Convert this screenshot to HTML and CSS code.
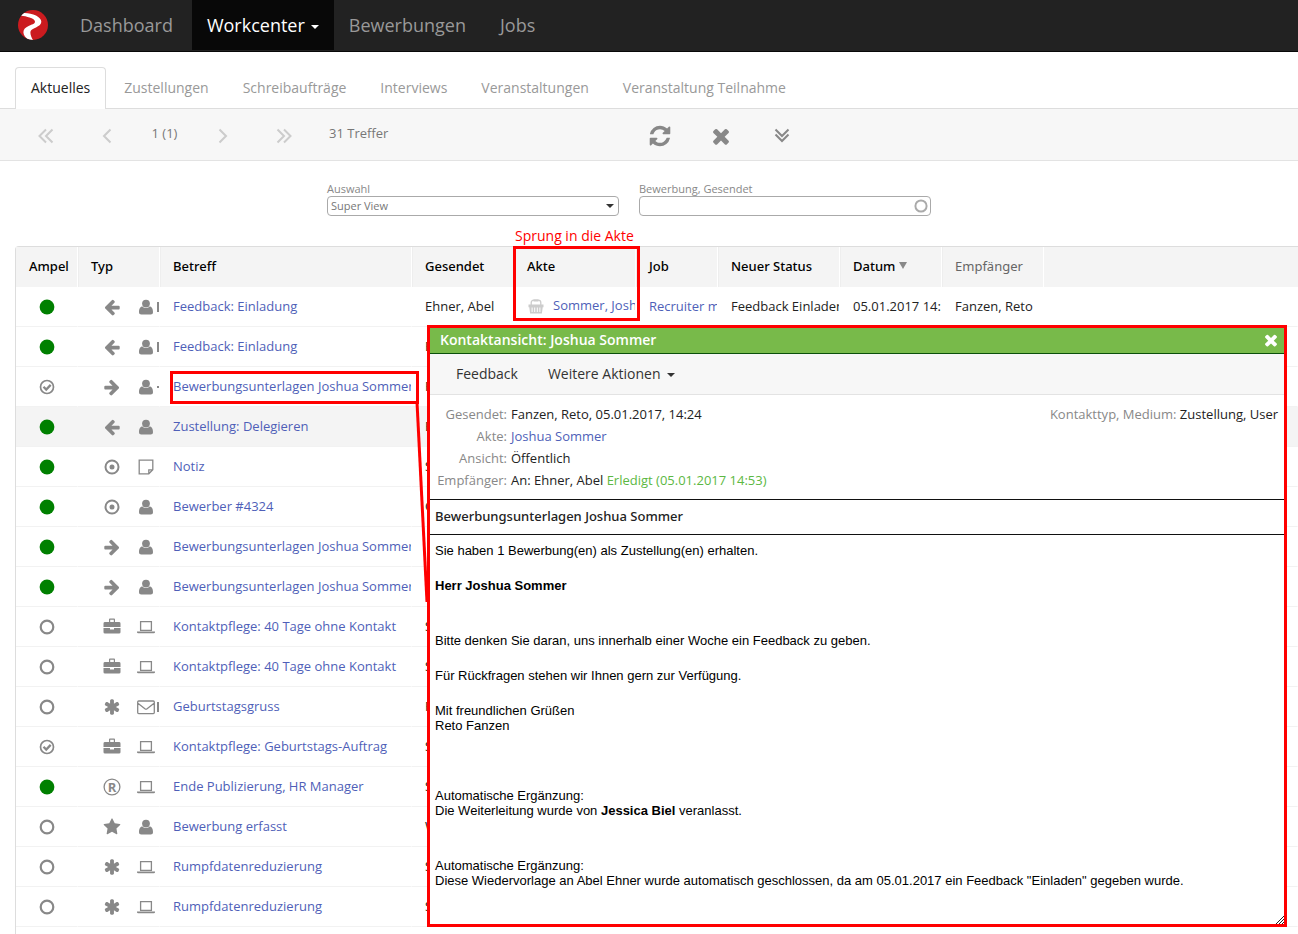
FILE: index.html
```html
<!DOCTYPE html>
<html lang="de">
<head>
<meta charset="utf-8">
<title>Workcenter</title>
<link rel="stylesheet" href="styles.css">
</head>
<body>
<svg class="sprite" aria-hidden="true">
  <symbol id="left" viewBox="0 0 1792 1792"><path d="M1664 896v128q0 53-32.5 90.5t-84.5 37.5h-704l293 294q38 36 38 90t-38 90l-75 76q-37 37-90 37-52 0-91-37l-651-652q-37-37-37-90 0-52 37-91l651-650q38-38 91-38 52 0 90 38l75 74q38 38 38 91t-38 91l-293 293h704q52 0 84.500 37.500t32.500 90.500z"/></symbol>
  <symbol id="right" viewBox="0 0 1792 1792"><path d="M1600 960q0 54-37 91l-651 651q-39 37-91 37-51 0-90-37l-75-75q-38-38-38-91t38-91l293-293h-704q-52 0-84.500-37.500t-32.500-90.500v-128q0-53 32.500-90.500t84.500-37.500h704l-293-294q-38-36-38-90t38-90l75-75q38-38 90-38 53 0 91 38l651 651q37 35 37 90z"/></symbol>
  <symbol id="user" viewBox="0 0 18 18"><circle cx="9" cy="5.600" r="3.900"/><path d="M5.500 8.500C3 8.500 2 11 2 14.200 2 15.500 3 16.500 4.200 16.500h9.600c1.200 0 2.200-1 2.200-2.300 0-3.200-1-5.700-3.500-5.700-2 2-5 2-7 0z"/></symbol>
  <symbol id="target" viewBox="0 0 18 18"><circle cx="9" cy="9" r="6.500" fill="none" stroke="currentColor" stroke-width="2"/><circle cx="9" cy="9" r="2.500"/></symbol>
  <symbol id="note" viewBox="0 0 18 18"><path d="M2.200 2.200h13.600v9.600l-4 4H2.200zM11.800 15.800v-4h4" fill="none" stroke="currentColor" stroke-width="1.300"/></symbol>
  <symbol id="laptop" viewBox="0 0 18 18"><path d="M3.600 3.600h10.800v8.800H3.600z" fill="none" stroke="currentColor" stroke-width="1.300"/><path d="M0 13.500h18v.8q0 .9-1.200.9H1.200Q0 15.200 0 14.300z"/></symbol>
  <symbol id="case" viewBox="0 0 18 18"><path d="M6 4V1.500q0-.9.900-.9h4.200q.9 0 .9.900V4h4q1.500 0 1.500 1.400V9h-17V5.400Q.5 4 2 4zM7.200 4h3.600V1.800H7.200zM.5 10H7v1.500h4V10h6.500v4.200q0 1.400-1.500 1.400H2q-1.500 0-1.500-1.400z" fill-rule="evenodd"/></symbol>
  <symbol id="asterisk" viewBox="0 0 1792 1792"><path d="M1546 1050q46 26 59.500 77.500t-12.500 97.500l-64 110q-26 46-77.500 59.500t-97.500-12.500l-266-153v307q0 52-38 90t-90 38h-128q-52 0-90-38t-38-90v-307l-266 153q-46 26-97.500 12.500t-77.500-59.500l-64-110q-26-46-12.500-97.500t59.500-77.500l266-154-266-154q-46-26-59.500-77.500t12.500-97.500l64-110q26-46 77.500-59.500t97.500 12.500l266 153v-307q0-52 38-90t90-38h128q52 0 90 38t38 90v307l266-153q46-26 97.500-12.500t77.500 59.500l64 110q26 46 12.500 97.500t-59.500 77.500l-266 154z"/></symbol>
  <symbol id="mail" viewBox="0 0 18 18"><path d="M1.700 3h14.600q1 0 1 1v10.600q0 1-1 1H1.700q-1 0-1-1V4q0-1 1-1zM.9 5.200l7 5.500q1.100.8 2.200 0l7-5.500" fill="none" stroke="currentColor" stroke-width="1.300"/></symbol>
  <symbol id="star" viewBox="0 0 1792 1792"><path d="M1728 647q0 22-26 48l-363 354 86 500q1 7 1 20 0 21-10.500 35.500t-30.500 14.500q-19 0-40-12l-449-236-449 236q-22 12-40 12-21 0-31.500-14.500t-10.500-35.500q0-6 2-20l86-500-364-354q-25-27-25-48 0-37 56-46l502-73 225-455q19-41 49-41t49 41l225 455 502 73q56 9 56 46z"/></symbol>
  <symbol id="dot" viewBox="0 0 18 18"><circle cx="9" cy="9" r="7.400"/></symbol>
  <symbol id="ring" viewBox="0 0 18 18"><circle cx="9" cy="9" r="6.300" fill="none" stroke="currentColor" stroke-width="2.200"/></symbol>
  <symbol id="check" viewBox="0 0 18 18"><circle cx="9" cy="9" r="6.500" fill="none" stroke="currentColor" stroke-width="1.700"/><path d="M5.500 8.800l2.700 2.700 4.500-4.600" fill="none" stroke="currentColor" stroke-width="2.300"/></symbol>
  <symbol id="reg" viewBox="0 0 18 18"><circle cx="9" cy="9" r="7.900" fill="none" stroke="currentColor" stroke-width="1.300"/><text x="9" y="13.500" text-anchor="middle" font-size="13" font-weight="700">R</text></symbol>
  <symbol id="basket" viewBox="0 0 18 18"><path d="M4.200 7V4.800q0-2.600 2.600-2.600h4.400q2.600 0 2.600 2.600V7" fill="none" stroke="currentColor" stroke-width="1.300"/><path d="M6.500 1.500h5v2h-5zM1.500 6.500h15v2.700h-.8l-.8 6.200H3.100l-.8-6.200h-.8zM4.600 9.500v4.500h1V9.500zm2.600 0v4.500h1V9.500zm2.600 0v4.500h1V9.500zm2.600 0v4.500h1V9.500z" fill-rule="evenodd"/></symbol>
  <symbol id="times" viewBox="0 0 1792 1792"><path d="M1490 1322q0 40-28 68l-136 136q-28 28-68 28t-68-28l-294-294-294 294q-28 28-68 28t-68-28l-136-136q-28-28-28-68t28-68l294-294-294-294q-28-28-28-68t28-68l136-136q28-28 68-28t68 28l294 294 294-294q28-28 68-28t68 28l136 136q28 28 28 68t-28 68l-294 294 294 294q28 28 28 68z"/></symbol>
  <symbol id="refresh" viewBox="0 0 1792 1792"><path d="M1639 1056q0 5-1 7-64 268-268 434.500t-478 166.500q-146 0-282.500-55t-243.500-157l-129 129q-19 19-45 19t-45-19-19-45v-448q0-26 19-45t45-19h448q26 0 45 19t19 45-19 45l-137 137q71 66 161 102t187 36q134 0 250-65t186-179q11-17 53-117 8-23 30-23h192q13 0 22.500 9.500t9.500 22.500zm25-800v448q0 26-19 45t-45 19h-448q-26 0-45-19t-19-45 19-45l138-138q-148-137-349-137-134 0-250 65t-186 179q-11 17-53 117-8 23-30 23h-199q-13 0-22.500-9.500t-9.500-22.500v-7q65-268 270-434.500t480-166.500q146 0 284 55.500t245 156.500l130-129q19-19 45-19t45 19 19 45z"/></symbol>
</svg>

<div class="page">
  <nav class="navbar">
    <a class="brand" href="#" aria-label="Start"><svg class="logo" viewBox="0 0 30 30"><defs><clipPath id="disc"><circle cx="15" cy="15" r="15"/></clipPath></defs><circle cx="15" cy="15" r="15" fill="#cb1b1f"/><path clip-path="url(#disc)" fill="#fff" d="M4.500 3C9 2.600 14 3.500 18 5.600c3.500 1.900 5.500 4 5.300 6.500-.2 2.600-2.500 4-5.300 5.300-3 1.300-5.500 2.300-5.600 5 0 2.500 1 5 2.800 8.100L10.300 30C7.500 27.500 5.400 25 5.400 22.300c0-3 2-4.800 5.200-6.300 3-1.400 6.300-2 6.400-4.200.1-1.700-2.200-3.200-5.500-4.200C8.800 6.700 5 5.500 2 5.800z"/></svg></a>
    <a class="nav-link" href="#">Dashboard</a>
    <a class="nav-link active" href="#">Workcenter<span class="caret"></span></a>
    <a class="nav-link" href="#">Bewerbungen</a>
    <a class="nav-link" href="#">Jobs</a>
  </nav>

  <nav class="tabs">
    <a class="tab current" href="#">Aktuelles</a>
    <a class="tab" href="#">Zustellungen</a>
    <a class="tab" href="#">Schreibaufträge</a>
    <a class="tab" href="#">Interviews</a>
    <a class="tab" href="#">Veranstaltungen</a>
    <a class="tab" href="#">Veranstaltung Teilnahme</a>
  </nav>

  <div class="toolbar">
    <button class="tool pager" aria-label="Erste Seite"><svg class="icon" viewBox="0 0 18 18"><path d="M9 2.500L2.500 9 9 15.500M15.500 2.500L9 9l6.500 6.500"/></svg></button>
    <button class="tool pager" aria-label="Zurück"><svg class="icon" viewBox="0 0 18 18"><path d="M12.500 2.500L6 9l6.500 6.500"/></svg></button>
    <span class="page-no">1 (1)</span>
    <button class="tool pager" aria-label="Weiter"><svg class="icon" viewBox="0 0 18 18"><path d="M5.500 2.500L12 9l-6.500 6.500"/></svg></button>
    <button class="tool pager" aria-label="Letzte Seite"><svg class="icon" viewBox="0 0 18 18"><path d="M2.500 2.500L9 9l-6.500 6.500M9 2.500L15.500 9 9 15.500"/></svg></button>
    <span class="hits">31 Treffer</span>
    <button class="tool" aria-label="Aktualisieren"><svg class="icon big"><use href="#refresh"/></svg></button>
    <button class="tool" aria-label="Löschen"><svg class="icon big"><use href="#times"/></svg></button>
    <button class="tool" aria-label="Mehr"><svg class="icon" viewBox="0 0 18 18"><path d="M2.500 2.500L9 9l6.500-6.500M2.500 7.500L9 14l6.500-6.500"/></svg></button>
  </div>

  <form class="filters">
    <div class="field">
      <label for="view">Auswahl</label>
      <div class="control"><select id="view"><option>Super View</option></select><span class="caret"></span></div>
    </div>
    <div class="field">
      <label for="sent">Bewerbung, Gesendet</label>
      <div class="control search"><input id="sent" type="text"><svg class="icon hint"><use href="#ring"/></svg></div>
    </div>
  </form>

  <main class="list">
    <table class="grid">
      <colgroup><col class="w62"><col class="w82"><col class="w252"><col class="w102"><col class="w122"><col class="w82"><col class="w122"><col class="w102"><col class="w102"><col></colgroup>
      <thead>
        <tr><th>Ampel</th><th>Typ</th><th>Betreff</th><th>Gesendet</th><th>Akte</th><th>Job</th><th>Neuer Status</th><th>Datum<span class="sort"></span></th><th class="light">Empfänger</th><th></th></tr>
      </thead>
      <tbody>
        <tr><td class="lamp on"><svg class="icon"><use href="#dot"/></svg></td><td class="type"><svg class="icon"><use href="#left"/></svg><svg class="icon"><use href="#user"/></svg><i class="more"></i></td><td><a href="#">Feedback: Einladung</a></td><td>Ehner, Abel</td><td><svg class="icon basket"><use href="#basket"/></svg><a href="#">Sommer, Joshua</a></td><td><a href="#">Recruiter m/w</a></td><td>Feedback Einladen</td><td>05.01.2017 14:53</td><td>Fanzen, Reto</td><td></td></tr>
        <tr><td class="lamp on"><svg class="icon"><use href="#dot"/></svg></td><td class="type"><svg class="icon"><use href="#left"/></svg><svg class="icon"><use href="#user"/></svg><i class="more"></i></td><td><a href="#">Feedback: Einladung</a></td><td>E</td><td></td><td></td><td></td><td></td><td></td><td></td></tr>
        <tr><td class="lamp"><svg class="icon"><use href="#check"/></svg></td><td class="type"><svg class="icon"><use href="#right"/></svg><svg class="icon"><use href="#user"/></svg><i class="more tiny"></i></td><td><a href="#">Bewerbungsunterlagen Joshua Sommer</a></td><td>F</td><td></td><td></td><td></td><td></td><td></td><td></td></tr>
        <tr class="hover"><td class="lamp on"><svg class="icon"><use href="#dot"/></svg></td><td class="type"><svg class="icon"><use href="#left"/></svg><svg class="icon"><use href="#user"/></svg></td><td><a href="#">Zustellung: Delegieren</a></td><td>E</td><td></td><td></td><td></td><td></td><td></td><td></td></tr>
        <tr><td class="lamp on"><svg class="icon"><use href="#dot"/></svg></td><td class="type"><svg class="icon"><use href="#target"/></svg><svg class="icon"><use href="#note"/></svg></td><td><a href="#">Notiz</a></td><td>S</td><td></td><td></td><td></td><td></td><td></td><td></td></tr>
        <tr><td class="lamp on"><svg class="icon"><use href="#dot"/></svg></td><td class="type"><svg class="icon"><use href="#target"/></svg><svg class="icon"><use href="#user"/></svg></td><td><a href="#">Bewerber #4324</a></td><td>O</td><td></td><td></td><td></td><td></td><td></td><td></td></tr>
        <tr><td class="lamp on"><svg class="icon"><use href="#dot"/></svg></td><td class="type"><svg class="icon"><use href="#right"/></svg><svg class="icon"><use href="#user"/></svg></td><td><a href="#">Bewerbungsunterlagen Joshua Sommer</a></td><td></td><td></td><td></td><td></td><td></td><td></td><td></td></tr>
        <tr><td class="lamp on"><svg class="icon"><use href="#dot"/></svg></td><td class="type"><svg class="icon"><use href="#right"/></svg><svg class="icon"><use href="#user"/></svg></td><td><a href="#">Bewerbungsunterlagen Joshua Sommer</a></td><td></td><td></td><td></td><td></td><td></td><td></td><td></td></tr>
        <tr><td class="lamp"><svg class="icon"><use href="#ring"/></svg></td><td class="type"><svg class="icon"><use href="#case"/></svg><svg class="icon"><use href="#laptop"/></svg></td><td><a href="#">Kontaktpflege: 40 Tage ohne Kontakt</a></td><td>S</td><td></td><td></td><td></td><td></td><td></td><td></td></tr>
        <tr><td class="lamp"><svg class="icon"><use href="#ring"/></svg></td><td class="type"><svg class="icon"><use href="#case"/></svg><svg class="icon"><use href="#laptop"/></svg></td><td><a href="#">Kontaktpflege: 40 Tage ohne Kontakt</a></td><td>S</td><td></td><td></td><td></td><td></td><td></td><td></td></tr>
        <tr><td class="lamp"><svg class="icon"><use href="#ring"/></svg></td><td class="type"><svg class="icon"><use href="#asterisk"/></svg><svg class="icon"><use href="#mail"/></svg><i class="more"></i></td><td><a href="#">Geburtstagsgruss</a></td><td>F</td><td></td><td></td><td></td><td></td><td></td><td></td></tr>
        <tr><td class="lamp"><svg class="icon"><use href="#check"/></svg></td><td class="type"><svg class="icon"><use href="#case"/></svg><svg class="icon"><use href="#laptop"/></svg></td><td><a href="#">Kontaktpflege: Geburtstags-Auftrag</a></td><td>S</td><td></td><td></td><td></td><td></td><td></td><td></td></tr>
        <tr><td class="lamp on"><svg class="icon"><use href="#dot"/></svg></td><td class="type"><svg class="icon"><use href="#reg"/></svg><svg class="icon"><use href="#laptop"/></svg></td><td><a href="#">Ende Publizierung, HR Manager</a></td><td>S</td><td></td><td></td><td></td><td></td><td></td><td></td></tr>
        <tr><td class="lamp"><svg class="icon"><use href="#ring"/></svg></td><td class="type"><svg class="icon"><use href="#star"/></svg><svg class="icon"><use href="#user"/></svg></td><td><a href="#">Bewerbung erfasst</a></td><td>W</td><td></td><td></td><td></td><td></td><td></td><td></td></tr>
        <tr><td class="lamp"><svg class="icon"><use href="#ring"/></svg></td><td class="type"><svg class="icon"><use href="#asterisk"/></svg><svg class="icon"><use href="#laptop"/></svg></td><td><a href="#">Rumpfdatenreduzierung</a></td><td>S</td><td></td><td></td><td></td><td></td><td></td><td></td></tr>
        <tr><td class="lamp"><svg class="icon"><use href="#ring"/></svg></td><td class="type"><svg class="icon"><use href="#asterisk"/></svg><svg class="icon"><use href="#laptop"/></svg></td><td><a href="#">Rumpfdatenreduzierung</a></td><td>S</td><td></td><td></td><td></td><td></td><td></td><td></td></tr>
      </tbody>
    </table>
  </main>

  <div class="mark-label">Sprung in die Akte</div>
  <div class="mark mark-file"></div>
  <div class="mark mark-subject"></div>
  <svg class="connector" viewBox="0 0 14 200"><path d="M2 0L12 200" stroke="#f00" stroke-width="3"/></svg>

  <section class="dialog">
    <header class="dialog-title"><h2>Kontaktansicht: Joshua Sommer</h2><button class="close" aria-label="Schließen"><svg class="icon"><use href="#times"/></svg></button></header>
    <div class="dialog-tools"><button>Feedback</button><button>Weitere Aktionen<span class="caret"></span></button></div>
    <div class="meta">
      <dl>
        <dt>Gesendet:</dt><dd>Fanzen, Reto, 05.01.2017, 14:24</dd>
        <dt>Akte:</dt><dd><a href="#">Joshua Sommer</a></dd>
        <dt>Ansicht:</dt><dd>Öffentlich</dd>
        <dt>Empfänger:</dt><dd>An: Ehner, Abel <span class="done">Erledigt (05.01.2017 14:53)</span></dd>
      </dl>
      <div><span class="muted">Kontakttyp, Medium:</span> Zustellung, User</div>
    </div>
    <h3 class="subject">Bewerbungsunterlagen Joshua Sommer</h3>
    <div class="message">
      <p>Sie haben 1 Bewerbung(en) als Zustellung(en) erhalten.</p>
      <p class="far"><b>Herr Joshua Sommer</b></p>
      <p>Bitte denken Sie daran, uns innerhalb einer Woche ein Feedback zu geben.</p>
      <p>Für Rückfragen stehen wir Ihnen gern zur Verfügung.</p>
      <p class="farther">Mit freundlichen Grüßen<br>Reto Fanzen</p>
      <p class="far">Automatische Ergänzung:<br>Die Weiterleitung wurde von <b>Jessica Biel</b> veranlasst.</p>
      <p>Automatische Ergänzung:<br>Diese Wiedervorlage an Abel Ehner wurde automatisch geschlossen, da am 05.01.2017 ein Feedback "Einladen" gegeben wurde.</p>
    </div>
    <svg class="grip" viewBox="0 0 8 8"><path d="M0 8L8 0M3 8l5-5M6 8l2-2" stroke="#222" fill="none"/></svg>
  </section>
</div>
</body>
</html>
```

FILE: styles.css
```css
* { box-sizing: border-box; }
body { margin: 0; background: #fff; color: #222; font: 13px/20px "Open Sans", "Noto Sans", sans-serif; }
a { color: #4f5fb8; text-decoration: none; }
button { border: 0; padding: 0; background: none; font: inherit; color: inherit; }
.sprite { position: absolute; width: 0; height: 0; }
.page { position: relative; display: flex; flex-direction: column; min-height: 100vh; }
.icon { width: 18px; height: 18px; fill: currentColor; flex: none; }
.icon.big { width: 24px; height: 24px; }
.caret { display: inline-block; border: 4px solid transparent; border-top-color: currentColor; border-bottom: 0; margin-left: 6px; vertical-align: middle; }

.navbar { display: flex; height: 52px; padding-left: 18px; background: #222; border-bottom: 1px solid #080808; font-size: 18px; line-height: 50px; }
.brand { display: flex; align-items: center; width: 47px; height: 50px; }
.logo { width: 30px; height: 30px; }
.nav-link { height: 50px; padding: 0 15px; margin-right: 4px; color: #999; }
.nav-link.active { margin-right: 0; background: #080808; color: #fff; }

.tabs { display: flex; gap: 2px; padding: 15px 15px 0; border-bottom: 1px solid #ddd; font-size: 14px; }
.tab { padding: 10px 15px; border: 1px solid transparent; border-bottom: 0; border-radius: 4px 4px 0 0; color: #999; }
.tab.current { margin-bottom: -1px; padding-bottom: 11px; border-color: #ddd; background: #fff; color: #222; }

.toolbar { display: flex; height: 52px; padding-left: 15px; background: #f7f7f7; border-bottom: 1px solid #e3e3e3; color: #777; line-height: 48px; }
.tool { display: flex; align-items: center; justify-content: center; width: 61px; padding-top: 2px; color: #888; }
.tool path { fill: none; stroke: currentColor; stroke-width: 2; }
.pager { color: #ccc; }
.page-no { width: 55px; text-align: center; }
.hits { width: 315px; padding-left: 15px; }

.filters { display: flex; gap: 20px; margin: 0 auto; padding: 20px 40px 30px 0; width: 644px; }
.field { flex: 1; font-size: 11px; line-height: 15px; color: #888; }
.field label { display: block; }
.control { display: flex; align-items: center; height: 20px; padding-right: 4px; border: 1px solid #aaa; border-radius: 4px; }
.control.search { padding-right: 1px; }
.control select, .control input { flex: 1; height: 18px; border: 0; padding: 0 3px 1px; background: none; font: inherit; color: #777; appearance: none; outline: 0; }
.control .caret { color: #333; }
.hint { width: 16px; height: 16px; color: #aaa; }

.list { flex: 1; margin-left: 15px; border: 1px solid #ddd; border-width: 1px 0 0 1px; border-top-left-radius: 4px; }
.grid { width: 100%; table-layout: fixed; border-spacing: 0; }
.w62 { width: 62px; } .w82 { width: 82px; } .w102 { width: 102px; } .w122 { width: 122px; } .w252 { width: 252px; }
th, td { height: 40px; padding: 0 0 2px 13px; overflow: hidden; white-space: nowrap; text-align: left; }
th { background: #f4f4f4; border-right: 1px solid #fff; border-left: 1px solid #eee; padding-left: 12px; color: #000; font-family: "Noto Sans", "Open Sans", sans-serif; font-weight: 500; }
th:first-child { padding-left: 13px; border-left: 0; }
th:last-child { border: 0; }
.light { color: #666; font-weight: 400; }
.sort { display: inline-block; margin-left: 4px; border: 4px solid transparent; border-top: 7px solid #888; border-bottom: 0; vertical-align: 2px; }
td { border-right: 1px solid transparent; border-bottom: 1px solid #f2f2f2; }
.hover td { background: #f4f4f4; }
td .icon { vertical-align: middle; }
.lamp { padding: 0 0 2px; text-align: center; color: #888; }
.lamp.on { color: #008000; }
.type { padding-left: 25px; color: #888; }
.type .icon + .icon { margin-left: 16px; }
.more { display: inline-block; width: 2px; height: 10px; margin-left: 2px; background: #888; vertical-align: middle; }
.more.tiny { height: 2px; }
.basket { margin-right: 8px; color: #ccc; }

.mark { position: absolute; border: 3px solid #f00; }
.mark-label { position: absolute; left: 515px; top: 226px; color: #f00; font-size: 14px; }
.mark-file { left: 513px; top: 246px; width: 127px; height: 75px; }
.mark-subject { left: 170px; top: 371px; width: 249px; height: 33px; }
.connector { position: absolute; left: 415px; top: 402px; width: 14px; height: 200px; }

.dialog { position: absolute; left: 427px; right: 11px; top: 325px; border: 3px solid #f00; background: #fff; }
.dialog-title { display: flex; align-items: center; justify-content: space-between; height: 26px; padding: 0 4px 2px 10px; background: #78ba4a; border-bottom: 1px solid #0a500a; color: #fff; }
.dialog-title h2 { margin: 0; font-size: 14px; font-weight: 600; }
.close { display: flex; }
.dialog-tools { display: flex; gap: 30px; height: 41px; padding-left: 26px; background: #f7f7f7; border-bottom: 1px solid #e3e3e3; color: #333; font-size: 14px; }
.meta { display: flex; justify-content: space-between; padding: 8px 6px; border-bottom: 1px solid #111; line-height: 22px; }
.meta dl { display: grid; grid-template-columns: 71px auto; column-gap: 4px; margin: 0; }
.meta dt { text-align: right; color: #888; }
.meta dd { margin: 0; }
.muted { color: #888; }
.done { color: #5cb843; }
.subject { margin: 0; padding: 6px 5px 8px; border-bottom: 1px solid #111; font-family: "Noto Sans", "Open Sans", sans-serif; font-size: 13px; font-weight: 500; }
.message { min-height: 389px; padding: 8px 5px; color: #000; font: 13px/15px "Liberation Sans", Arial, sans-serif; }
.message p { margin: 0 0 20px; }
.message .far { margin-bottom: 40px; }
.message .farther { margin-bottom: 55px; }
.grip { position: absolute; right: 0; bottom: 0; width: 8px; height: 8px; }
```
